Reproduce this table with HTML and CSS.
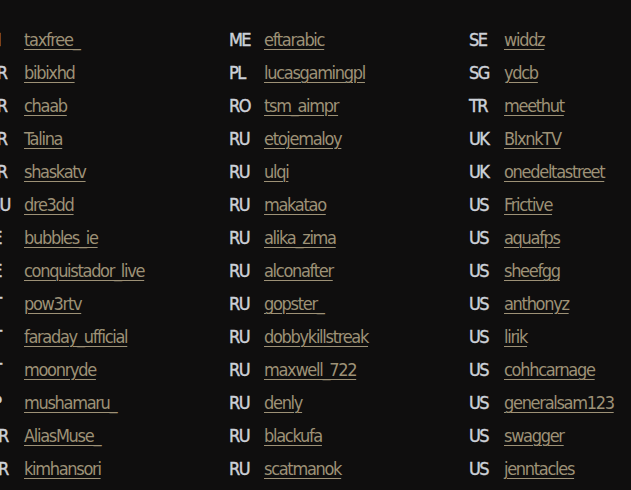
FILE: index.html
```html
<!DOCTYPE html>
<html>
<head>
<meta charset="utf-8">
<link rel="stylesheet" href="styles.css">
</head>
<body>
<div class="viewport">
<ul class="list">
<li class="item"><span class="cc">FI</span><a class="name" href="#">taxfree_</a></li>
<li class="item"><span class="cc">FR</span><a class="name" href="#">bibixhd</a></li>
<li class="item"><span class="cc">FR</span><a class="name" href="#">chaab</a></li>
<li class="item"><span class="cc">FR</span><a class="name" href="#">Talina</a></li>
<li class="item"><span class="cc">FR</span><a class="name" href="#">shaskatv</a></li>
<li class="item"><span class="cc">HU</span><a class="name" href="#">dre3dd</a></li>
<li class="item"><span class="cc">IE</span><a class="name" href="#">bubbles_ie</a></li>
<li class="item"><span class="cc">IE</span><a class="name" href="#">conquistador_live</a></li>
<li class="item"><span class="cc">IT</span><a class="name" href="#">pow3rtv</a></li>
<li class="item"><span class="cc">IT</span><a class="name" href="#">faraday_ufficial</a></li>
<li class="item"><span class="cc">IT</span><a class="name" href="#">moonryde</a></li>
<li class="item"><span class="cc">JP</span><a class="name" href="#">mushamaru_</a></li>
<li class="item"><span class="cc">KR</span><a class="name" href="#">AliasMuse_</a></li>
<li class="item"><span class="cc">KR</span><a class="name" href="#">kimhansori</a></li>

<li class="item"><span class="cc">ME</span><a class="name" href="#">eftarabic</a></li>
<li class="item"><span class="cc">PL</span><a class="name" href="#">lucasgamingpl</a></li>
<li class="item"><span class="cc">RO</span><a class="name" href="#">tsm_aimpr</a></li>
<li class="item"><span class="cc">RU</span><a class="name" href="#">etojemaloy</a></li>
<li class="item"><span class="cc">RU</span><a class="name" href="#">ulqi</a></li>
<li class="item"><span class="cc">RU</span><a class="name" href="#">makatao</a></li>
<li class="item"><span class="cc">RU</span><a class="name" href="#">alika_zima</a></li>
<li class="item"><span class="cc">RU</span><a class="name" href="#">alconafter</a></li>
<li class="item"><span class="cc">RU</span><a class="name" href="#">gopster_</a></li>
<li class="item"><span class="cc">RU</span><a class="name" href="#">dobbykillstreak</a></li>
<li class="item"><span class="cc">RU</span><a class="name" href="#">maxwell_722</a></li>
<li class="item"><span class="cc">RU</span><a class="name" href="#">denly</a></li>
<li class="item"><span class="cc">RU</span><a class="name" href="#">blackufa</a></li>
<li class="item"><span class="cc">RU</span><a class="name" href="#">scatmanok</a></li>

<li class="item"><span class="cc">SE</span><a class="name" href="#">widdz</a></li>
<li class="item"><span class="cc">SG</span><a class="name" href="#">ydcb</a></li>
<li class="item"><span class="cc">TR</span><a class="name" href="#">meethut</a></li>
<li class="item"><span class="cc">UK</span><a class="name" href="#">BlxnkTV</a></li>
<li class="item"><span class="cc">UK</span><a class="name" href="#">onedeltastreet</a></li>
<li class="item"><span class="cc">US</span><a class="name" href="#">Frictive</a></li>
<li class="item"><span class="cc">US</span><a class="name" href="#">aquafps</a></li>
<li class="item"><span class="cc">US</span><a class="name" href="#">sheefgg</a></li>
<li class="item"><span class="cc">US</span><a class="name" href="#">anthonyz</a></li>
<li class="item"><span class="cc">US</span><a class="name" href="#">lirik</a></li>
<li class="item"><span class="cc">US</span><a class="name" href="#">cohhcarnage</a></li>
<li class="item"><span class="cc">US</span><a class="name" href="#">generalsam123</a></li>
<li class="item"><span class="cc">US</span><a class="name" href="#">swagger</a></li>
<li class="item"><span class="cc">US</span><a class="name" href="#">jenntacles</a></li>
</ul>
</div>
</body>
</html>
```
FILE: styles.css
```css
html, body {
  margin: 0;
  padding: 0;
  background: #0f0e0e;
  height: 100%;
  overflow: hidden;
}
.viewport {
  overflow: hidden;
  width: 631px;
  height: 490px;
}
.list {
  list-style: none;
  margin: 0 0 0 -11px;
  padding: 23px 0 0 0;
  display: grid;
  grid-auto-flow: column;
  grid-template-rows: repeat(14, 33px);
  grid-template-columns: repeat(3, 240px);
  font-family: "DejaVu Sans Condensed", "DejaVu Sans", sans-serif;
  font-stretch: condensed;
  font-size: 18px;
  line-height: 33px;
  letter-spacing: -1.3px;
}
.item {
  display: flex;
  white-space: nowrap;
}
.cc {
  width: 35px;
  flex: none;
  color: #cdd1d8;
  font-weight: 500;
  letter-spacing: -1.6px;
  -webkit-text-stroke: 0.4px #cdd1d8;
}
.name {
  color: #9d9176;
  text-decoration: underline;
  text-decoration-color: #9d9176;
  text-underline-offset: 3px;
  text-decoration-thickness: 1px;
}
```
